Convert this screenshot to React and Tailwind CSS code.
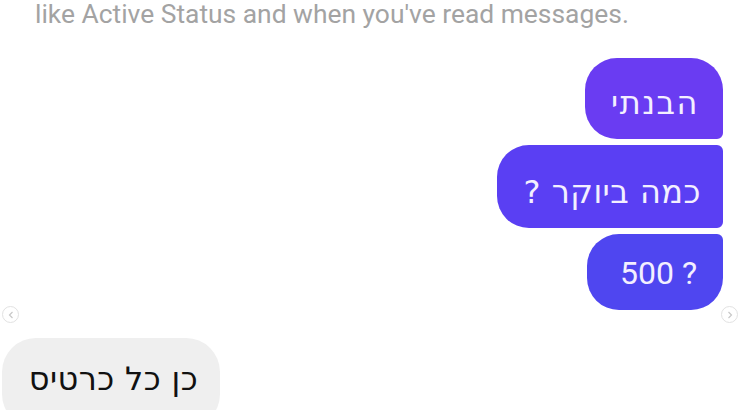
export default function App() {
  const font = { fontFamily: '"Roboto", "Open Sans", "Liberation Sans", sans-serif' };
  const heb = { fontFamily: '"DejaVu Sans", "Liberation Sans", sans-serif' };

  return (
    <div className="w-[740px] h-[410px] overflow-hidden bg-white flex flex-col" style={font}>
      <p className="pl-[35px] text-[26.4px] leading-[32px] text-[#a3a3a3] -mt-[2px]">
        like Active Status and when you've read messages.
      </p>

      <div className="flex flex-col items-end gap-[6px] pr-[17px] mt-[28px]">
        <div
          dir="rtl"
          style={heb}
          className="w-[138px] h-[81px] flex items-center justify-start pr-[24px] rounded-tl-[32px] rounded-tr-[32px] rounded-br-[6px] rounded-bl-[32px] bg-[#6a3cf2] text-[#f3efff] text-[32px] tracking-[1.5px]"
        >
          <span className="pt-[8px]">הבנתי</span>
        </div>
        <div
          dir="rtl"
          style={heb}
          className="w-[226px] h-[83px] flex items-center justify-start pr-[22px] rounded-tl-[32px] rounded-tr-[6px] rounded-br-[6px] rounded-bl-[32px] bg-[#5a3ff3] text-[#f3efff] text-[32px] tracking-[0.5px]"
        >
          <span className="pt-[10px]">כמה ביוקר ?</span>
        </div>
        <div className="w-[136px] h-[76px] flex items-center justify-end pr-[26px] rounded-tl-[32px] rounded-tr-[6px] rounded-br-[32px] rounded-bl-[32px] bg-[#4f46f0] text-[#f3efff] text-[32px]">
          <span className="pt-[2px]">500 ?</span>
        </div>
      </div>

      <div className="flex justify-between px-[2px] -mt-[4px]">
        <div className="w-[17px] h-[17px] rounded-full border border-[#e2e2e2] flex items-center justify-center">
          <svg width="8" height="8" viewBox="0 0 8 8" fill="none" stroke="#c8c8c8" strokeWidth="1.2">
            <path d="M5.5 1 L2.5 4 L5.5 7" />
          </svg>
        </div>
        <div className="w-[17px] h-[17px] rounded-full border border-[#e2e2e2] flex items-center justify-center">
          <svg width="8" height="8" viewBox="0 0 8 8" fill="none" stroke="#c8c8c8" strokeWidth="1.2">
            <path d="M2.5 1 L5.5 4 L2.5 7" />
          </svg>
        </div>
      </div>

      <div className="pl-[2px] mt-[15px]">
        <div
          dir="rtl"
          style={heb}
          className="w-[218px] h-[90px] flex items-start justify-start pr-[22px] pt-[17px] rounded-[34px] bg-[#efefef] text-[#111111] text-[32px] tracking-[0.4px]"
        >
          כן כל כרטיס
        </div>
      </div>
    </div>
  );
}
